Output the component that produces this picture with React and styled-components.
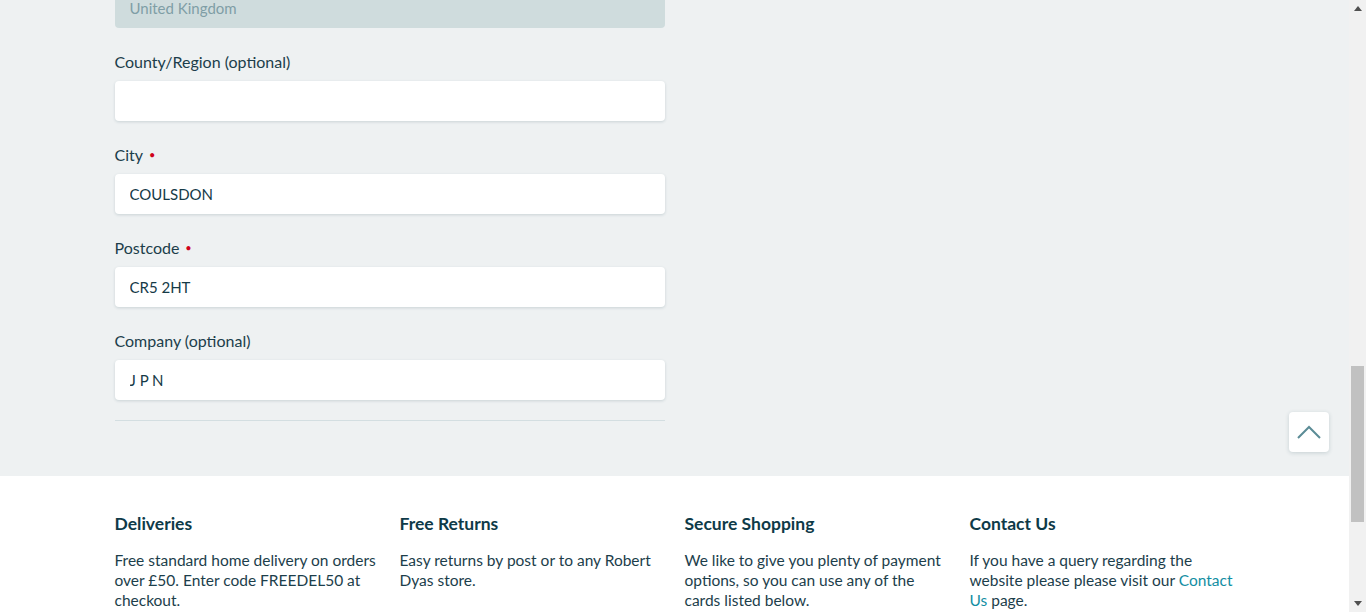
import React, { useLayoutEffect, useRef } from "react"
import styled, { createGlobalStyle } from "styled-components"

const GlobalStyle = createGlobalStyle`
  html, body {
    margin: 0;
    padding: 0;
    overflow: hidden;
    height: 100%;
  }
  body {
    font-family: "Lato", "Open Sans", sans-serif;
    color: #123c4a;
  }
  * { box-sizing: border-box; }
`

const Window = styled.div`
  display: flex;
  height: 100vh;
  width: 100vw;
`

const Viewport = styled.div`
  flex: 1;
  height: 100%;
  overflow: hidden;
  position: relative;
`

const Main = styled.section`
  background: #eef1f2;
  padding: 40px 0 55px;
`

const Container = styled.div`
  max-width: 1120px;
  margin: 0 auto;
`

const Form = styled.form`
  width: 550px;
`

const Fields = styled.div`
  display: flex;
  flex-direction: column;
  gap: 24px;
`

const Label = styled.label`
  display: block;
  font-size: 16px;
  line-height: 20px;
  margin-bottom: 9px;
  color: #1c3e4b;
`

const Required = styled.span`
  color: #d0021b;
  font-size: 11px;
  margin-left: 6px;
  vertical-align: 2px;
`

const Input = styled.input`
  display: block;
  width: 100%;
  height: 40px;
  border: none;
  border-radius: 4px;
  padding: 0 15px;
  font-family: inherit;
  font-size: 15px;
  color: ${(p) => (p.disabled ? "#7f9ea6" : "#153a47")};
  background: ${(p) => (p.disabled ? "#cfdcdd" : "#ffffff")};
  box-shadow: ${(p) => (p.disabled ? "none" : "0 1px 3px rgba(40, 80, 90, 0.18)")};
  outline: none;
  -webkit-text-fill-color: ${(p) => (p.disabled ? "#7f9ea6" : "#153a47")};
  opacity: 1;
`

const Divider = styled.hr`
  border: none;
  border-top: 1px solid #d3dee1;
  margin: 20px 0 0;
`

const Footer = styled.footer`
  background: #ffffff;
  padding: 38px 0 60px;
`

const Columns = styled.div`
  display: grid;
  grid-template-columns: repeat(4, 1fr);
  gap: 20px;
`

const ColTitle = styled.h4`
  margin: 0 0 16px;
  font-size: 17.5px;
  line-height: 20px;
  font-weight: 700;
  color: #0e3a48;
`

const ColText = styled.p`
  margin: 0;
  font-size: 15.5px;
  line-height: 20px;
  color: #1c3e4b;
`

const Link = styled.a`
  color: #138ea3;
  text-decoration: none;
`

const BackToTop = styled.button`
  position: absolute;
  right: 37px;
  top: 412px;
  width: 40px;
  height: 40px;
  border: none;
  border-radius: 4px;
  background: #ffffff;
  box-shadow: 0 1px 4px rgba(40, 80, 90, 0.2);
  display: flex;
  align-items: center;
  justify-content: center;
  padding: 0;
  cursor: pointer;
`

const Scrollbar = styled.div`
  width: 17px;
  height: 100%;
  background: #f1f1f1;
  display: flex;
  flex-direction: column;
`

const Arrow = styled.div`
  height: 17px;
  display: flex;
  align-items: center;
  justify-content: center;
`

const Track = styled.div`
  flex: 1;
  padding-top: ${(p) => p.offset}px;
`

const Thumb = styled.div`
  width: 13px;
  margin-left: 2px;
  height: ${(p) => p.size}px;
  background: #c1c1c1;
`

const hiddenFields = [
  { label: "First name", value: "James", required: true },
  { label: "Last name", value: "Newman", required: true },
  { label: "Address line 1", value: "12 BRIGHTON ROAD", required: true },
  { label: "Address line 2 (optional)", value: "" },
]

const fields = [
  { label: "County/Region (optional)", value: "" },
  { label: "City", value: "COULSDON", required: true },
  { label: "Postcode", value: "CR5 2HT", required: true },
  { label: "Company (optional)", value: "J P N" },
]

const footerCols = [
  {
    title: "Deliveries",
    text: "Free standard home delivery on orders over £50. Enter code FREEDEL50 at checkout.",
  },
  {
    title: "Free Returns",
    text: "Easy returns by post or to any Robert Dyas store.",
  },
  {
    title: "Secure Shopping",
    text: "We like to give you plenty of payment options, so you can use any of the cards listed below.",
  },
]

function FormField({ label, value, required, disabled, inputRef }) {
  return (
    <div>
      <Label>
        {label}
        {required && <Required>•</Required>}
      </Label>
      <Input ref={inputRef} defaultValue={value} disabled={disabled} readOnly />
    </div>
  )
}

export default function App() {
  const viewRef = useRef(null)
  const countryRef = useRef(null)

  // page is shown scrolled so the country field just peeks in at the top
  useLayoutEffect(() => {
    const view = viewRef.current
    const input = countryRef.current
    if (!view || !input) return
    const top =
      input.getBoundingClientRect().bottom -
      view.getBoundingClientRect().top +
      view.scrollTop
    view.scrollTop = top - 28
  }, [])

  return (
    <>
      <GlobalStyle />
      <Window>
        <Viewport ref={viewRef}>
          <Main>
            <Container>
              <Form>
                <Fields>
                  {hiddenFields.map((f) => (
                    <FormField key={f.label} {...f} />
                  ))}
                  <FormField
                    label="Country"
                    value="United Kingdom"
                    disabled
                    inputRef={countryRef}
                  />
                  {fields.map((f) => (
                    <FormField key={f.label} {...f} />
                  ))}
                </Fields>
                <Divider />
              </Form>
            </Container>
          </Main>
          <Footer>
            <Container>
              <Columns>
                {footerCols.map((c) => (
                  <div key={c.title}>
                    <ColTitle>{c.title}</ColTitle>
                    <ColText>{c.text}</ColText>
                  </div>
                ))}
                <div>
                  <ColTitle>Contact Us</ColTitle>
                  <ColText>
                    If you have a query regarding the website please please
                    visit our <Link href="#">Contact Us</Link> page.
                  </ColText>
                </div>
              </Columns>
            </Container>
          </Footer>
        </Viewport>
        <BackToTop aria-label="Back to top">
          <svg width="24" height="14" viewBox="0 0 24 14" fill="none">
            <path
              d="M1 13 L12 2 L23 13"
              stroke="#5b8c96"
              strokeWidth="2"
            />
          </svg>
        </BackToTop>
        <Scrollbar>
          <Arrow>
            <svg width="8" height="5" viewBox="0 0 8 5">
              <path d="M0 5 L4 0 L8 5 Z" fill="#505050" />
            </svg>
          </Arrow>
          <Track offset={349}>
            <Thumb size={156} />
          </Track>
          <Arrow>
            <svg width="8" height="5" viewBox="0 0 8 5">
              <path d="M0 0 L8 0 L4 5 Z" fill="#505050" />
            </svg>
          </Arrow>
        </Scrollbar>
      </Window>
    </>
  )
}
